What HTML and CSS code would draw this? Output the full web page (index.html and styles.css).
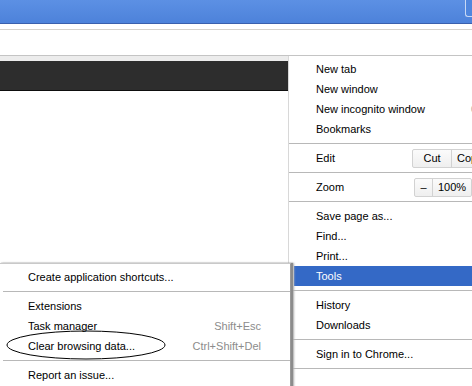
FILE: index.html
```html
<!DOCTYPE html>
<html lang="en">
<head>
    <meta charset="UTF-8">
    <title>Chrome menu</title>
    <link rel="stylesheet" href="styles.css">
</head>
<body>
    <div class="window">
        <div class="titlebar"><span class="caption-btn"></span></div>
        <div class="addressbar"></div>
        <div class="bookmarkbar"></div>
        <div class="darkbar"></div>
        <div class="page"></div>

        <!-- main wrench menu -->
        <div class="menu main-menu">
            <div class="item">New tab</div>
            <div class="item">New window</div>
            <div class="item">New incognito window<span class="key">Ctrl+Shift+N</span></div>
            <div class="item">Bookmarks</div>
            <div class="sep"></div>
            <div class="item row">
                <span class="label">Edit</span>
                <span class="btn-group"><span class="btn cut">Cut</span><span class="btn">Copy</span></span>
            </div>
            <div class="sep"></div>
            <div class="item row">
                <span class="label zoom-label">Zoom</span>
                <span class="btn-group"><span class="btn minus">&ndash;</span><span class="btn">100%</span></span>
            </div>
            <div class="sep"></div>
            <div class="item">Save page as...</div>
            <div class="item">Find...</div>
            <div class="item">Print...</div>
            <div class="item active">Tools</div>
            <div class="sep"></div>
            <div class="item">History</div>
            <div class="item">Downloads</div>
            <div class="sep"></div>
            <div class="item">Sign in to Chrome...</div>
            <div class="sep"></div>
        </div>

        <!-- tools submenu -->
        <div class="menu sub-menu">
            <div class="item">Create application shortcuts...</div>
            <div class="sep"></div>
            <div class="item">Extensions</div>
            <div class="item">Task manager<span class="key">Shift+Esc</span></div>
            <div class="item">Clear browsing data...<span class="key">Ctrl+Shift+Del</span></div>
            <div class="sep"></div>
            <div class="item">Report an issue...</div>
        </div>

        <svg class="circle" width="162" height="32" viewBox="0 0 162 32">
            <ellipse cx="81" cy="16" rx="79" ry="14" fill="none" stroke="#000" stroke-width="1"/>
        </svg>
    </div>
</body>
</html>
```

FILE: styles.css
```css
/* General */
body {
    margin: 0;
    font-family: "Liberation Sans", Arial, sans-serif;
    font-size: 11px;
    color: #000;
    background: #fff;
}
.window {
    position: relative;
    width: 472px;
    height: 386px;
    overflow: hidden;
}

/* Window chrome */
.titlebar {
    height: 23px;
    background: linear-gradient(#5c90e4, #4d82da);
    border-bottom: 1px solid #3a60ad;
    display: flex;
    justify-content: flex-end;
}
.caption-btn {
    width: 10px;
    height: 16px;
    margin-right: -4px;
    border-left: 1px solid #c7d8f5;
    border-bottom: 1px solid #c7d8f5;
    border-bottom-left-radius: 3px;
    background: #4f86de;
}
.addressbar {
    height: 5px;
    border-bottom: 1px solid #d6d3ce;
}
.bookmarkbar {
    height: 25px;
    border-bottom: 1px solid #c4c4c4;
}
.darkbar {
    height: 29px;
    border-top: 5px solid #ececec;
    background: #2d2d2d;
    border-bottom: 1px solid #0e0e0e;
}

/* Menus */
.menu {
    position: absolute;
    background: #fff;
    padding-top: 3px;
}
.main-menu {
    left: 288px;
    top: 56px;
    width: 260px;
    height: 340px;
    border-left: 1px solid #d8d8d8;
}
.sub-menu {
    left: -1px;
    top: 263px;
    width: 291px;
    height: 140px;
    border-top: 1px solid #c9c9c9;
    border-right: 1px solid #9a9a9a;
    box-shadow: 2px 0 1px #8c8c8c, 3px 0 2px #b4b4b4;
}
.item {
    height: 20px;
    line-height: 20px;
    padding-right: 29px;
    white-space: nowrap;
    display: flex;
}
.main-menu .item {
    padding-left: 27px;
}
.sub-menu .item {
    padding-left: 29px;
}
.key {
    margin-left: auto;
    color: #8c8c8c;
}
.main-menu .key {
    margin-left: 46px;
    color: #b0b0b0;
}
.item.active {
    background: #3469c6;
    color: #fff;
    margin-left: 5px;
    padding-left: 22px;
}
.sep {
    height: 1px;
    margin: 4px 0 4px 0;
    background: #b8b8b8;
}
.sub-menu .sep {
    margin-left: 4px;
}

/* Edit / Zoom buttons */
.row {
    align-items: center;
}
.label {
    width: 96px;
    flex-shrink: 0;
}
.zoom-label {
    width: 98px;
}
.btn-group {
    display: flex;
    flex-shrink: 0;
    height: 17px;
    border: 1px solid #d2d2d2;
    border-radius: 2px;
    background: linear-gradient(#fbfbfb, #efefef);
    line-height: 17px;
}
.btn {
    padding: 0 5px;
    border-left: 1px solid #d2d2d2;
}
.btn:first-child {
    border-left: none;
}
.cut {
    width: 28px;
    text-align: center;
}
.minus {
    width: 7px;
    text-align: center;
}

/* Annotation */
.circle {
    position: absolute;
    left: 5px;
    top: 329px;
}
```
